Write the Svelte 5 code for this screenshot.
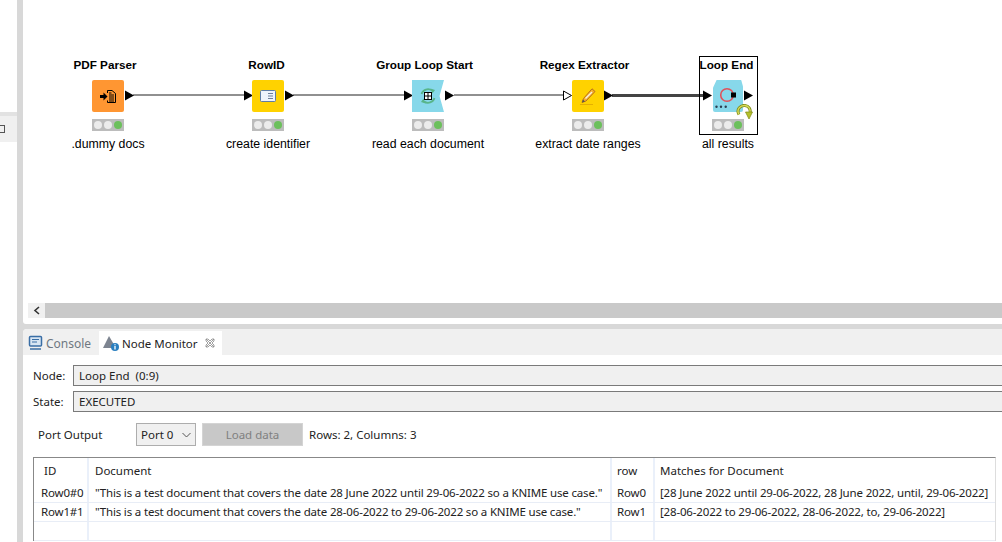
<script>
  const nodes = [
    { name: 'PDF Parser', note: '.dummy docs', x: 92, kind: 'pdf', nudge: 6 },
    { name: 'RowID', note: 'create identifier', x: 252, kind: 'rowid', nudge: 3 },
    { name: 'Group Loop Start', note: 'read each document', x: 412, kind: 'group', nudge: 7 },
    { name: 'Regex Extractor', note: 'extract date ranges', x: 572, kind: 'regex', nudge: 7 },
    { name: 'Loop End', note: 'all results', x: 712, kind: 'end', nudge: 3 }
  ];

  const outPorts = [125, 285, 445, 604, 744];
  const inPorts = [244, 404, 703];

  const rows = [
    {
      id: 'Row0#0',
      doc: '"This is a test document that covers the date 28 June 2022 until 29-06-2022 so a KNIME use case."',
      row: 'Row0',
      matches: '[28 June 2022 until 29-06-2022, 28 June 2022, until, 29-06-2022]'
    },
    {
      id: 'Row1#1',
      doc: '"This is a test document that covers the date 28-06-2022 to 29-06-2022 so a KNIME use case."',
      row: 'Row1',
      matches: '[28-06-2022 to 29-06-2022, 28-06-2022, to, 29-06-2022]'
    },
    { id: '', doc: '', row: '', matches: '' }
  ];
</script>

<div class="page">
  <aside class="rail">
    <div class="rail-tab"><span class="rail-icon"></span></div>
  </aside>

  <main class="main">
    <section class="editor">
      <div class="canvas">
        <svg class="wires" width="979" height="300" viewBox="23 0 979 300">
          <path d="M133 95H244M293 95H404M454 95H563" stroke="#909090" stroke-width="2" fill="none" />
          <path d="M612 95.500H704" stroke="#444" stroke-width="3" fill="none" />
          {#each [...outPorts, ...inPorts] as px}
            <path d="M{px} 90.500l9 5-9 5z" fill="#000" />
          {/each}
          <path d="M563.500 91l8 4.500-8 4.500z" fill="#fff" stroke="#000" />
        </svg>

        {#each nodes as node}
          <div class="node" class:selected={node.kind === 'end'} style="left: {node.x}px">
            <div class="node-name" style="margin-right: {node.nudge}px">{node.name}</div>
            <div class="node-icon {node.kind}">
              {#if node.kind === 'pdf'}
                <svg width="16" height="13" viewBox="0 0 16 13">
                  <path d="M0 5h3.500V2.500L7.500 6.500l-4 4V8H0z" fill="#000" />
                  <path d="M7.500 3V.5h4.500l3.500 3v9h-8v-2" fill="none" stroke="#000" />
                  <path d="M9 5h5M9 7h5M9 9h5M9 11h5M9 3h2.500" stroke="#000" />
                </svg>
              {:else if node.kind === 'rowid'}
                <svg width="16" height="12" viewBox="0 0 16 12">
                  <rect x=".5" y=".5" width="15" height="11" rx="1" fill="#eef3fb" stroke="#5f7da5" />
                  <path d="M8 3.500h5M8 6h5M8 8.500h5" stroke="#6d7f99" />
                </svg>
              {:else if node.kind === 'group'}
                <svg width="16" height="16" viewBox="0 0 16 16">
                  <path d="M1.500 6A6.800 6.800 0 0 1 12 2.500" fill="none" stroke="#58b58a" stroke-width="1.800" />
                  <path d="M10.500.5l4.500 1.500-2.500 3.500z" fill="#58b58a" />
                  <path d="M14.500 10A6.800 6.800 0 0 1 4 13.500" fill="none" stroke="#58b58a" stroke-width="1.800" />
                  <path d="M5.500 15.500L1 14l2.500-3.500z" fill="#58b58a" />
                  <rect x="4.500" y="4.500" width="7" height="7" fill="#fff" stroke="#000" />
                  <path d="M8 4.500v7M4.500 8h7" stroke="#000" />
                </svg>
              {:else if node.kind === 'regex'}
                <svg width="16" height="17" viewBox="0 0 16 17">
                  <path d="M12 .8l3 2.700L6 13l-4 1.500L3.500 10.500z" fill="#f6ae2d" stroke="#b8721a" />
                  <path d="M11.500 3.500l1 1-6.500 6.500-1-1z" fill="#f4f0e4" />
                  <path d="M2 14.500l1-3 2 2z" fill="#555" />
                  <path d="M0 16.500h13" stroke="#e6b000" />
                </svg>
              {:else if node.kind === 'end'}
                <svg width="30" height="30" viewBox="0 0 30 30">
                  <circle cx="13" cy="14" r="6.300" fill="none" stroke="#e0525a" stroke-width="1.600" />
                  <rect x="17" y="11.500" width="5" height="5" fill="#000" />
                  <circle cx="2.500" cy="25.700" r="1.200" fill="#2c3e50" />
                  <circle cx="7" cy="25.700" r="1.200" fill="#2c3e50" />
                  <circle cx="11.700" cy="25.700" r="1.200" fill="#2c3e50" />
                </svg>
              {/if}
            </div>
            {#if node.kind === 'end'}
              <svg class="loop-badge" width="17" height="16" viewBox="0 0 17 16">
                <path d="M3 10.500C0 5.500 4.500 1 9 1.500c3.500.4 6 3.500 5 7.500" fill="none" stroke="#7f8a14" stroke-width="3" />
                <path d="M3 10.500C0 5.500 4.500 1 9 1.500c3.500.4 6 3.500 5 7.500" fill="none" stroke="#d6dc5a" stroke-width="1.400" />
                <path d="M9.500 8h7l-3.500 7z" fill="#b6c22b" stroke="#7f8a14" stroke-width=".7" />
              </svg>
            {/if}
            <div class="lights">
              <span></span><span></span><span class="on"></span>
            </div>
            <div class="node-note">{node.note}</div>
          </div>
        {/each}
      </div>

      <div class="hscroll">
        <div class="scroll-btn">
          <svg width="8" height="9" viewBox="0 0 8 9">
            <path d="M6 1L2 4.500 6 8" fill="none" stroke="#333" stroke-width="1.600" />
          </svg>
        </div>
        <div class="scroll-track"></div>
      </div>
    </section>

    <section class="panel">
      <div class="tabs">
        <div class="tab">
          <svg width="16" height="16" viewBox="0 0 16 16">
            <rect x="1.500" y="1.500" width="12" height="9.500" rx="1" fill="#d8e6f3" stroke="#3a6ea5" stroke-width="1.500" />
            <path d="M4 4.500h7M4 7h5" stroke="#3a6ea5" />
            <path d="M2 14h11" stroke="#3a6ea5" stroke-width="1.500" />
          </svg>
          <span>Console</span>
        </div>
        <div class="tab active">
          <svg width="18" height="18" viewBox="0 0 18 18">
            <path d="M7 2L14 14H1z" fill="#7d8490" />
            <circle cx="13" cy="13" r="4" fill="#2a7fc0" />
            <path d="M13 12v3.500M13 10.300v1" stroke="#fff" stroke-width="1.300" />
          </svg>
          <span>Node Monitor</span>
          <svg class="close" width="10" height="10" viewBox="0 0 10 10">
            <path d="M1 1l8 8M9 1L1 9M1 1h2l2 2 2-2h2v2L7 5l2 2v2H7L5 7 3 9H1V7l2-2-2-2z" fill="none" stroke="#888" stroke-width=".8" />
          </svg>
        </div>
      </div>

      <div class="body">
        <div class="field">
          <span class="field-label">Node:</span>
          <div class="field-value">Loop End&nbsp; (0:9)</div>
        </div>
        <div class="field">
          <span class="field-label">State:</span>
          <div class="field-value">EXECUTED</div>
        </div>

        <div class="port-row">
          <span class="port-label">Port Output</span>
          <div class="select">
            <span>Port 0</span>
            <svg width="9" height="6" viewBox="0 0 9 6">
              <path d="M.5 1l4 4 4-4" fill="none" stroke="#555" />
            </svg>
          </div>
          <button class="load" disabled>Load data</button>
          <span class="summary">Rows: 2, Columns: 3</span>
        </div>

        <div class="table">
          <div class="tr head">
            <div class="td id-head">ID</div>
            <div class="td">Document</div>
            <div class="td row-col">row</div>
            <div class="td">Matches for Document</div>
          </div>
          {#each rows as r}
            <div class="tr">
              <div class="td key">{r.id}</div>
              <div class="td">{r.doc}</div>
              <div class="td row-col">{r.row}</div>
              <div class="td">{r.matches}</div>
            </div>
          {/each}
        </div>
      </div>
    </section>
  </main>
</div>

<style>
  :global(body) {
    margin: 0;
    background: #fff;
  }

  .page {
    display: flex;
    width: 1002px;
    height: 542px;
    overflow: hidden;
    font-family: "Noto Sans", sans-serif;
    font-size: 11.5px;
    color: #222;
  }

  .rail {
    flex: none;
    padding-top: 112px;
    box-sizing: border-box;
    background: #fff;
    border-right: 6px solid #d8d8d8;
    width: 23px;
  }

  .rail-tab {
    height: 26px;
    width: 17px;
    background: #f0f0f0;
    border-top: 4px solid #e2e2e2;
    display: flex;
    align-items: center;
  }

  .rail-icon {
    width: 5px;
    height: 8px;
    border: 1px solid #555;
    border-left: none;
    box-sizing: border-box;
  }

  .main {
    flex: 1;
    display: flex;
    flex-direction: column;
    min-width: 0;
    background: #d8d8d8;
  }

  .editor {
    height: 324px;
    flex: none;
    background: #fff;
    display: flex;
    flex-direction: column;
    border-bottom-left-radius: 3px;
  }

  .canvas {
    position: relative;
    height: 303px;
    flex: none;
    margin-left: -23px;
    font-family: "Liberation Sans", Arial, sans-serif;
    color: #000;
  }

  .wires {
    position: absolute;
    left: 23px;
    top: 0;
  }

  .node {
    position: absolute;
    top: 0;
    width: 32px;
    display: flex;
    flex-direction: column;
    align-items: center;
  }

  .node.selected::before {
    content: '';
    position: absolute;
    left: -13px;
    top: 56px;
    width: 57px;
    height: 77px;
    border: 1px solid #000;
  }

  .node-name {
    position: relative;
    margin-top: 57px;
    height: 23px;
    line-height: 15px;
    font-size: 11.7px;
    font-weight: bold;
    white-space: nowrap;
  }

  .node-icon {
    position: relative;
    width: 32px;
    height: 32px;
    border-radius: 2px;
    display: flex;
    align-items: center;
    justify-content: center;
    flex: none;
  }

  .node-icon.pdf {
    background: #ff9632;
  }

  .node-icon.rowid,
  .node-icon.regex {
    background: #ffd200;
  }

  .node-icon.group {
    background: #87d8ea;
    border-radius: 0;
    clip-path: polygon(0 0, 100% 0, 86% 50%, 100% 100%, 0 100%);
  }

  .node-icon.end {
    background: #87d8ea;
    width: 30px;
    clip-path: polygon(12% 0, 94% 0, 100% 20%, 100% 100%, 0 100%, 0 24%);
  }

  .node-icon.end svg {
    position: absolute;
    left: 1px;
    top: 1px;
  }

  .loop-badge {
    position: absolute;
    left: 24px;
    top: 104px;
  }

  .lights {
    position: relative;
    width: 32px;
    height: 12px;
    margin-top: 7px;
    background: #bcbcbc;
    display: flex;
    align-items: center;
    gap: 2px;
    padding: 0 1px 0 2px;
    box-sizing: border-box;
    flex: none;
  }

  .lights span {
    width: 8px;
    height: 8px;
    border-radius: 50%;
    background: #ececec;
  }

  .lights span.on {
    background: #6cc05c;
  }

  .node-note {
    margin-top: 6px;
    line-height: 14px;
    font-size: 12.3px;
    white-space: nowrap;
  }

  .hscroll {
    display: flex;
    height: 15px;
    margin-left: 5px;
    flex: none;
  }

  .scroll-btn {
    width: 17px;
    background: #f0f0f0;
    display: flex;
    align-items: center;
    justify-content: center;
  }

  .scroll-track {
    flex: 1;
    background: #c9c9c9;
  }

  .panel {
    margin-top: 5px;
    flex: 1;
    background: #fff;
    border-top-left-radius: 4px;
    display: flex;
    flex-direction: column;
    min-height: 0;
  }

  .tabs {
    height: 26px;
    flex: none;
    display: flex;
    align-items: flex-end;
    background: #f0f0f0;
    border-top-left-radius: 4px;
    box-sizing: border-box;
    padding-left: 5px;
  }

  .tab {
    width: 71px;
    height: 24px;
    display: flex;
    align-items: center;
    gap: 2px;
    color: #6f7882;
    font-size: 12px;
  }

  .tab.active {
    width: auto;
    background: #fff;
    color: #222;
    font-size: 11.5px;
    padding: 0 7px 0 3px;
  }

  .close {
    margin-left: 5px;
  }

  .body {
    padding: 10px 0 0 10px;
    flex: 1;
    min-height: 0;
  }

  .field {
    display: flex;
    align-items: center;
    height: 21px;
    margin-bottom: 5px;
  }

  .field-label {
    width: 40px;
    color: #222;
  }

  .field-value {
    flex: 1;
    height: 21px;
    line-height: 19px;
    box-sizing: border-box;
    background: #f0f0f0;
    border: 1px solid #7a7a7a;
    border-right: none;
    padding-left: 5px;
  }

  .port-row {
    display: flex;
    align-items: center;
    height: 23px;
    margin-top: 11px;
    padding-left: 5px;
  }

  .port-label {
    width: 98px;
    flex: none;
  }

  .select {
    width: 60px;
    height: 23px;
    box-sizing: border-box;
    background: #f0f0f0;
    border: 1px solid #adadad;
    display: flex;
    align-items: center;
    justify-content: space-between;
    padding: 0 4px 0 4px;
    flex: none;
  }

  .load {
    width: 101px;
    height: 23px;
    margin-left: 6px;
    background: #c8c8c8;
    border: 1px solid #d4d4d4;
    color: #808080;
    font: inherit;
    padding: 0;
    flex: none;
  }

  .summary {
    margin-left: 6px;
  }

  .table {
    margin: 11px 6px 0 0;
    border-top: 1px solid #888;
    border-left: 1px solid #888;
    border-right: 1px solid #ddd;
  }

  .tr {
    display: grid;
    grid-template-columns: 55px 523px 43px 1fr;
    height: 19px;
    line-height: 18px;
    box-sizing: border-box;
    border-bottom: 1px solid #e8edf6;
    letter-spacing: -0.17px;
  }

  .tr.head {
    height: 26px;
    line-height: 25px;
    border-bottom: none;
    letter-spacing: 0;
  }

  .td {
    padding-left: 6px;
    border-right: 2px solid #eaf0fa;
    white-space: nowrap;
    overflow: hidden;
  }

  .td.key {
    padding-left: 7px;
  }

  .td.id-head {
    padding-left: 10px;
  }

  .td.row-col {
    padding-left: 5px;
  }

  .td:last-child {
    border-right: none;
    padding-left: 5px;
  }
</style>
